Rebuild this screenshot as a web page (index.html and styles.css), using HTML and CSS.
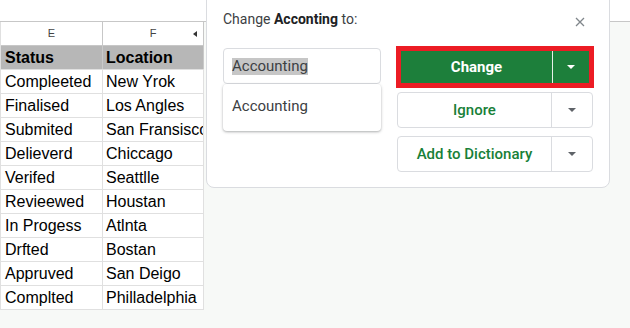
FILE: index.html
```html
<!DOCTYPE html>
<html>
<head>
<meta charset="utf-8">
<link rel="stylesheet" href="styles.css">
</head>
<body>
<div class="page">
  <div class="topbar"></div>
  <div class="sheet">
    <div class="row head">
      <div class="cell e">E</div>
      <div class="cell f">F<span class="tri"></span></div>
    </div>
    <div class="row title">
      <div class="cell e">Status</div>
      <div class="cell f">Location</div>
    </div>
    <div class="row"><div class="cell e">Compleeted</div><div class="cell f">New Yrok</div></div>
    <div class="row"><div class="cell e">Finalised</div><div class="cell f">Los Angles</div></div>
    <div class="row"><div class="cell e">Submited</div><div class="cell f">San Fransisco</div></div>
    <div class="row"><div class="cell e">Delieverd</div><div class="cell f">Chiccago</div></div>
    <div class="row"><div class="cell e">Verifed</div><div class="cell f">Seattlle</div></div>
    <div class="row"><div class="cell e">Revieewed</div><div class="cell f">Houstan</div></div>
    <div class="row"><div class="cell e">In Progess</div><div class="cell f">Atlnta</div></div>
    <div class="row"><div class="cell e">Drfted</div><div class="cell f">Bostan</div></div>
    <div class="row"><div class="cell e">Appruved</div><div class="cell f">San Deigo</div></div>
    <div class="row"><div class="cell e">Complted</div><div class="cell f">Philladelphia</div></div>
  </div>

  <div class="dialog">
    <div class="dlg-title">Change <b>Acconting</b> to:</div>
    <span class="close">
      <svg width="10" height="10" viewBox="0 0 10 10"><path d="M1 1L9 9M9 1L1 9" stroke="#80868b" stroke-width="1.3" fill="none"/></svg>
    </span>
    <div class="dlg-body">
      <div class="left">
        <div class="input"><span class="sel">Accounting</span></div>
        <div class="menu">Accounting</div>
      </div>
      <div class="right">
        <div class="btn primary">
          <span class="label">Change</span>
          <span class="drop"><span class="arrow"></span></span>
        </div>
        <div class="btn">
          <span class="label">Ignore</span>
          <span class="drop"><span class="arrow"></span></span>
        </div>
        <div class="btn last">
          <span class="label">Add to Dictionary</span>
          <span class="drop"><span class="arrow"></span></span>
        </div>
      </div>
    </div>
  </div>
</div>
</body>
</html>
```

FILE: styles.css
```css
html, body {
  margin: 0;
  padding: 0;
}
body {
  background: #f7f9f7;
  width: 630px;
  height: 328px;
  overflow: hidden;
}
.page {
  position: relative;
  width: 630px;
  height: 328px;
}
.topbar {
  height: 21px;
  background: #ffffff;
  border-bottom: 1px solid #c7c7c7;
}
.sheet {
  width: 203px;
  border-left: 1px solid #e0e0e0;
  font-family: "Liberation Sans", Arial, sans-serif;
  font-size: 16px;
  color: #000;
}
.row {
  display: flex;
  height: 23px;
  border-bottom: 1px solid #e0e0e0;
  background: #ffffff;
}
.cell {
  line-height: 23px;
  white-space: nowrap;
  overflow: hidden;
  padding-left: 4px;
  box-sizing: border-box;
  border-right: 1px solid #e0e0e0;
}
.cell.e { width: 102px; }
.cell.f { width: 101px; padding-left: 3px; }
.row.head {
  border-bottom-color: #c7c7c7;
}
.row.head .cell {
  font-size: 11px;
  color: #444;
  text-align: center;
  padding-left: 0;
  position: relative;
  border-right-color: #c7c7c7;
}
.tri {
  position: absolute;
  right: 6px;
  top: 9px;
  width: 0;
  height: 0;
  border-top: 3px solid transparent;
  border-bottom: 3px solid transparent;
  border-right: 4px solid #333;
}
.row.title {
  background: #b7b7b7;
  font-weight: bold;
}
.row.title .cell { border-right-color: #c9c9c9; }

.dialog {
  position: absolute;
  left: 206px;
  top: -8px;
  width: 404px;
  box-sizing: border-box;
  background: #fff;
  border: 1px solid #dadce0;
  border-radius: 8px;
  padding: 16px 16px 15px 16px;
  font-family: Roboto, "Liberation Sans", sans-serif;
  color: #3c4043;
}
.dlg-title {
  font-size: 14px;
  line-height: 20px;
  color: #3c4043;
}
.dlg-title b { font-weight: 700; color: #202124; }
.close {
  position: absolute;
  right: 24px;
  top: 24px;
  width: 10px;
  height: 10px;
  display: block;
}
.close svg { display: block; }
.dlg-body {
  display: flex;
  gap: 16px;
  margin-top: 17px;
  align-items: flex-start;
}
.left {
  width: 158px;
  margin-top: 2px;
  position: relative;
}
.input {
  height: 36px;
  box-sizing: border-box;
  border: 1px solid #dadce0;
  border-radius: 4px;
  padding-left: 8px;
  display: flex;
  align-items: center;
  font-size: 15px;
}
.sel {
  background: #c6c6c6;
  line-height: 17px;
  color: #3c4043;
}
.menu {
  position: absolute;
  left: 0;
  top: 36px;
  width: 158px;
  height: 47px;
  box-sizing: border-box;
  background: #fff;
  border-radius: 4px;
  box-shadow: 0 1px 3px rgba(60, 64, 67, 0.3), 0 1px 2px rgba(60, 64, 67, 0.15);
  padding-left: 9px;
  line-height: 44px;
  font-size: 15px;
  color: #3c4043;
}
.right {
  width: 196px;
  display: flex;
  flex-direction: column;
}
.btn {
  display: flex;
  height: 36px;
  box-sizing: border-box;
  border: 1px solid #dadce0;
  border-radius: 4px;
  margin-bottom: 8px;
  font-size: 15px;
  font-weight: 500;
  color: #188038;
}
.btn.last { margin-bottom: 0; }
.btn .label {
  flex: 1;
  display: flex;
  align-items: center;
  justify-content: center;
  border-right: 1px solid #dadce0;
}
.btn .drop {
  width: 40px;
  display: flex;
  align-items: center;
  justify-content: center;
}
.arrow {
  width: 0;
  height: 0;
  border-left: 4px solid transparent;
  border-right: 4px solid transparent;
  border-top: 4px solid #5f6368;
}
.btn.primary {
  height: 42px;
  margin: 0 -1px 4px -1px;
  border: 5px solid #ec1c24;
  border-radius: 0;
  background: #1d7f3b;
  color: #fff;
  font-weight: 700;
}
.btn.primary .label { border-right: 1px solid #e8f0ea; }
.btn.primary .drop { width: 36px; }
.btn.primary .arrow { border-top-color: #fff; }
```
